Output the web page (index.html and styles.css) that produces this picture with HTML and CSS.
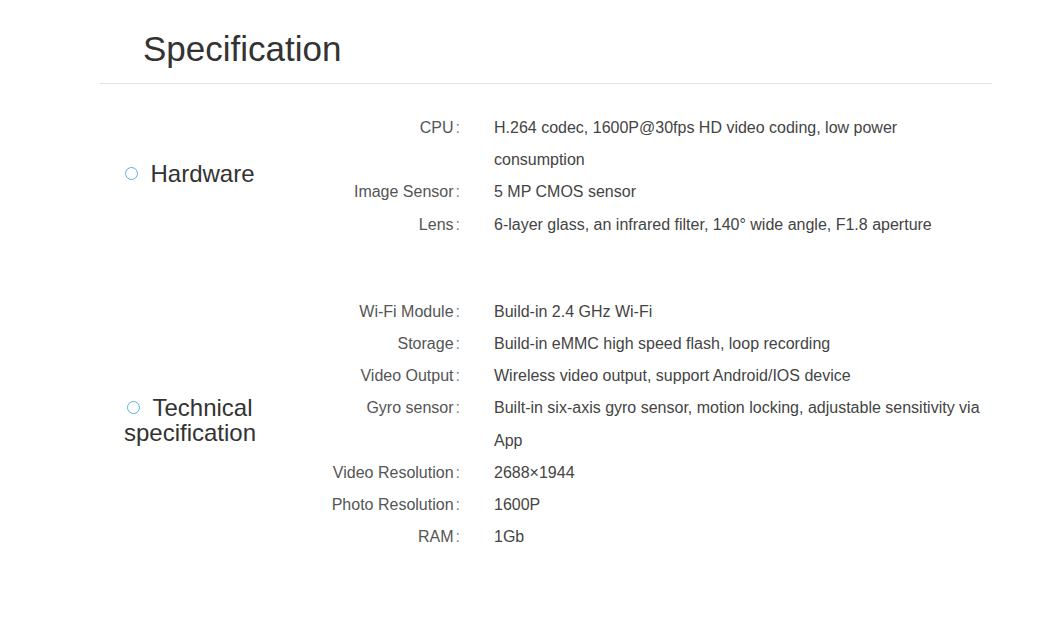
FILE: index.html
```html
<!DOCTYPE html>
<html>
<head>
    <title>Specification</title>
    <link rel="stylesheet" href="styles.css">
</head>
<body>
    <div class="container">
        <h2 class="title">Specification</h2>

        <div class="spec-group">
            <div class="group-name"><span class="dot"></span>Hardware</div>
            <div class="spec-list">
                <div class="spec-row">
                    <div class="spec-label">CPU<span class="colon">:</span></div>
                    <div class="spec-value">H.264 codec, 1600P@30fps HD video coding, low power consumption</div>
                </div>
                <div class="spec-row">
                    <div class="spec-label">Image Sensor<span class="colon">:</span></div>
                    <div class="spec-value">5 MP CMOS sensor</div>
                </div>
                <div class="spec-row">
                    <div class="spec-label">Lens<span class="colon">:</span></div>
                    <div class="spec-value">6-layer glass, an infrared filter, 140° wide angle, F1.8 aperture</div>
                </div>
            </div>
        </div>

        <div class="spec-group">
            <div class="group-name group-name-tech"><span class="dot"></span>Technical specification</div>
            <div class="spec-list">
                <div class="spec-row">
                    <div class="spec-label">Wi-Fi Module<span class="colon">:</span></div>
                    <div class="spec-value">Build-in 2.4 GHz Wi-Fi</div>
                </div>
                <div class="spec-row">
                    <div class="spec-label">Storage<span class="colon">:</span></div>
                    <div class="spec-value">Build-in eMMC high speed flash, loop recording</div>
                </div>
                <div class="spec-row">
                    <div class="spec-label">Video Output<span class="colon">:</span></div>
                    <div class="spec-value">Wireless video output, support Android/IOS device</div>
                </div>
                <div class="spec-row">
                    <div class="spec-label">Gyro sensor<span class="colon">:</span></div>
                    <div class="spec-value">Built-in six-axis gyro sensor, motion locking, adjustable sensitivity via App</div>
                </div>
                <div class="spec-row">
                    <div class="spec-label">Video Resolution<span class="colon">:</span></div>
                    <div class="spec-value">2688×1944</div>
                </div>
                <div class="spec-row">
                    <div class="spec-label">Photo Resolution<span class="colon">:</span></div>
                    <div class="spec-value">1600P</div>
                </div>
                <div class="spec-row">
                    <div class="spec-label">RAM<span class="colon">:</span></div>
                    <div class="spec-value">1Gb</div>
                </div>
            </div>
        </div>
    </div>
</body>
</html>
```
FILE: styles.css
```css
body {
    margin: 0;
    font-family: "Liberation Sans", Arial, sans-serif;
    color: #333;
    background: #fff;
}
.container {
    width: 892px;
    margin-left: 100px;
    padding-top: 28px;
}
.title {
    margin: 0;
    padding-left: 43px;
    font-size: 35px;
    font-weight: normal;
    line-height: 42px;
    color: #333;
    padding-bottom: 13px;
    border-bottom: 1px solid #e2e2e2;
}
.spec-group {
    display: flex;
    align-items: center;
    margin-top: 28px;
}
.spec-group + .spec-group {
    margin-top: 55px;
}
.group-name {
    width: 180px;
    text-align: center;
    font-size: 24px;
    line-height: 25px;
    color: #333;
    margin-top: -6px;
}
.group-name-tech {
    margin-top: -10px;
}
.dot {
    display: inline-block;
    width: 11px;
    height: 11px;
    border: 1.5px solid #5aaedc;
    border-radius: 50%;
    margin-right: 12px;
    vertical-align: 2px;
}
.spec-list {
    flex: 1;
}
.spec-row {
    display: flex;
    font-size: 16px;
    line-height: 32.2px;
    color: #444;
}
.spec-label {
    width: 180px;
    text-align: right;
    color: #555;
}
.colon {
    margin-left: 2px;
    color: #888;
}
.spec-value {
    width: 494px;
    margin-left: 34px;
}
```
